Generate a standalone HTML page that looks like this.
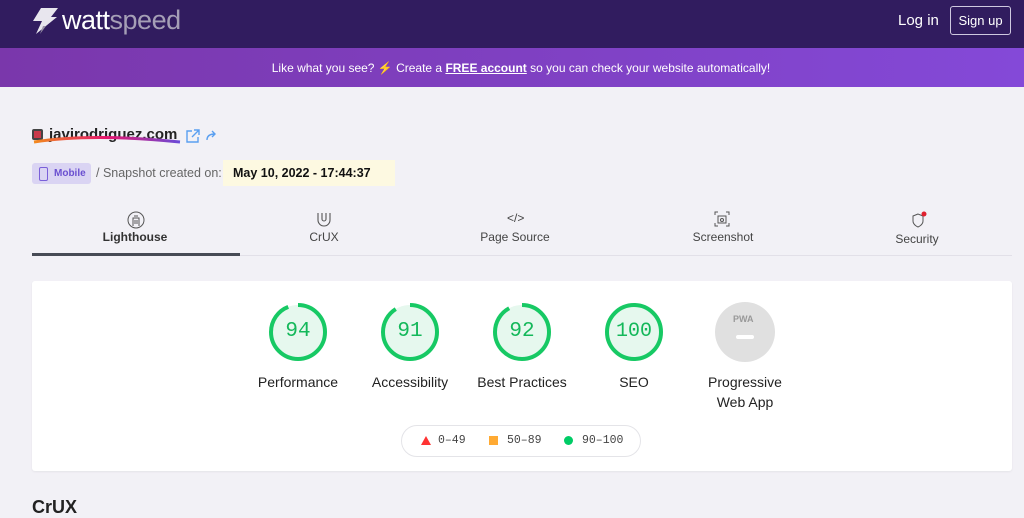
<!DOCTYPE html>
<html><head><meta charset="utf-8"><style>
*{margin:0;padding:0;box-sizing:border-box}
body{width:1024px;height:504px;overflow:hidden;background:#f2f1f6;font-family:"Liberation Sans",sans-serif;position:relative}
.hdr{position:absolute;left:0;top:0;width:1024px;height:48px;background:#311c5f}
.ban{position:absolute;left:0;top:48px;width:1024px;height:39px;background:linear-gradient(90deg,#7a37ab,#8449d8);color:#fff;font-size:12px;text-align:center;line-height:40px;padding-left:18px}
.abs{position:absolute}
.tab{position:absolute;top:230px;font-size:12px;color:#444;transform:translateX(-50%);white-space:nowrap}
.ring{position:absolute;top:302px;width:60px;height:60px;color:#14b85a;font-family:"Liberation Mono",monospace;font-size:21px;text-align:center;line-height:60px}
.ring svg{position:absolute;left:0;top:0}
.ring span{position:relative}
.lbl{position:absolute;top:372px;font-size:14px;color:#222;transform:translateX(-50%);text-align:center;line-height:20px}
</style></head><body>
<div class="hdr">
 <svg class="abs" style="left:32px;top:7px" width="30" height="30" viewBox="0 0 30 30"><path d="M9 1h17l-7 9h6L4 27l6-13H1z" fill="#e8e6ee"/><path d="M14 19l-6 8 3-8z" fill="#9a94a8"/></svg>
 <div class="abs" style="left:62px;top:5px;font-size:27px;color:#fff;letter-spacing:-0.5px">watt<span style="color:#a59fb6">speed</span></div>
 <div class="abs" style="left:898px;top:12px;font-size:15px;color:#fff">Log in</div>
 <div class="abs" style="left:950px;top:6px;width:61px;height:29px;border:1px solid #cfc8e0;border-radius:3px;color:#fff;font-size:13px;text-align:center;line-height:27px">Sign up</div>
</div>
<div class="ban">Like what you see? ⚡ Create a <b><u>FREE account</u></b> so you can check your website automatically!</div>
<div class="abs" style="left:32px;top:129px;width:11px;height:11px;background:#c9394a;border:2px solid #444;border-radius:2px"></div>
<div class="abs" style="left:49px;top:126px;font-size:15px;font-weight:bold;color:#222">javirodriguez.com</div>
<svg class="abs" style="left:32px;top:135px" width="150" height="10"><path d="M2 7 Q60 -2 148 7" stroke="url(#g)" stroke-width="3" fill="none"/><defs><linearGradient id="g"><stop offset="0" stop-color="#f28a1d"/><stop offset=".5" stop-color="#e6156f"/><stop offset="1" stop-color="#6a4bd8"/></linearGradient></defs></svg>
<svg class="abs" style="left:186px;top:129px" width="34" height="14" fill="none" stroke="#5a9ff0" stroke-width="1.4"><path d="M6 2H1v11h11V8M8 1h5v5M13 1L6 8"/><path d="M21 11c0-4 3-6 8-6M26 2l3 3-3 3"/></svg>
<div class="abs" style="left:32px;top:163px;width:59px;height:21px;background:#dad4f3;border-radius:3px;color:#6a4fd0;font-size:10px;font-weight:bold;line-height:21px;padding-left:22px">Mobile</div>
<div class="abs" style="left:39px;top:167px;width:9px;height:14px;border:1.5px solid #7a5fd9;border-radius:2px"></div>
<div class="abs" style="left:96px;top:166px;font-size:12.5px;color:#666">/ Snapshot created on:</div>
<div class="abs" style="left:223px;top:160px;width:172px;height:26px;background:#fdf9e1;font-size:12.5px;font-weight:bold;color:#111;line-height:26px;padding-left:10px">May 10, 2022 - 17:44:37</div>
<svg class="abs" style="left:126px;top:210px" width="20" height="20" fill="none" stroke="#555" stroke-width="1"><circle cx="10" cy="10" r="8"/><path d="M7 16V8h6v8M8 6h4M8 11h4M8 13h4"/></svg>
<svg class="abs" style="left:315px;top:210px" width="18" height="18" fill="none" stroke="#555" stroke-width="1.1"><path d="M3 3v7a6 6 0 0 0 12 0V3M7 3v6a2 2 0 0 0 4 0V3"/></svg>
<div class="abs" style="left:507px;top:211px;font-size:12px;color:#444">&lt;/&gt;</div>
<svg class="abs" style="left:714px;top:211px" width="16" height="16" fill="none" stroke="#555" stroke-width="1"><path d="M1 4V1h3M12 1h3v3M15 12v3h-3M4 15H1v-3"/><rect x="4" y="5" width="8" height="7"/><circle cx="8" cy="9" r="1.5"/></svg>
<svg class="abs" style="left:910px;top:210px" width="20" height="20" fill="none" stroke="#555" stroke-width="1"><path d="M8 4l-5 2v5c0 4 5 6 5 6s5-2 5-6V6z"/><circle cx="14" cy="4" r="2.5" fill="#e0202e" stroke="none"/></svg>
<div class="tab" style="left:135px;font-weight:bold;color:#333">Lighthouse</div>
<div class="tab" style="left:324px">CrUX</div>
<div class="tab" style="left:515px">Page Source</div>
<div class="tab" style="left:723px">Screenshot</div>
<div class="tab" style="left:917px;top:232px">Security</div>
<div class="abs" style="left:32px;top:255px;width:980px;height:1px;background:#e2e0e8"></div>
<div class="abs" style="left:32px;top:253px;width:208px;height:3px;background:#474b55"></div>
<div class="abs" style="left:32px;top:281px;width:980px;height:190px;background:#fff;border-radius:3px;box-shadow:0 1px 2px rgba(0,0,0,.06)"></div>
<div class="ring" style="left:268px"><svg width="60" height="60"><circle cx="30" cy="30" r="27" fill="#e6f8ee"/><circle cx="30" cy="30" r="27" fill="none" stroke="#17c964" stroke-width="4" stroke-dasharray="159.4 169.6" transform="rotate(-90 30 30)"/></svg><span>94</span></div>
<div class="ring" style="left:380px"><svg width="60" height="60"><circle cx="30" cy="30" r="27" fill="#e6f8ee"/><circle cx="30" cy="30" r="27" fill="none" stroke="#17c964" stroke-width="4" stroke-dasharray="154.4 169.6" transform="rotate(-90 30 30)"/></svg><span>91</span></div>
<div class="ring" style="left:492px"><svg width="60" height="60"><circle cx="30" cy="30" r="27" fill="#e6f8ee"/><circle cx="30" cy="30" r="27" fill="none" stroke="#17c964" stroke-width="4" stroke-dasharray="156 169.6" transform="rotate(-90 30 30)"/></svg><span>92</span></div>
<div class="ring" style="left:604px;font-size:20px"><svg width="60" height="60"><circle cx="30" cy="30" r="27" fill="#e6f8ee" stroke="#17c964" stroke-width="4"/></svg><span>100</span></div>
<div class="abs" style="left:715px;top:302px;width:60px;height:60px;border-radius:50%;background:#e0e0e0"></div>
<div class="abs" style="left:733px;top:314px;font-size:9px;color:#999;font-weight:bold">PWA</div>
<div class="abs" style="left:736px;top:335px;width:18px;height:4px;background:#fff;border-radius:2px"></div>
<div class="lbl" style="left:298px">Performance</div>
<div class="lbl" style="left:410px">Accessibility</div>
<div class="lbl" style="left:522px">Best Practices</div>
<div class="lbl" style="left:634px">SEO</div>
<div class="lbl" style="left:745px">Progressive<br>Web App</div>
<div class="abs" style="left:401px;top:425px;width:240px;height:32px;border:1px solid #e4e4e8;border-radius:16px;font-family:'Liberation Mono',monospace;font-size:11.5px;color:#444;line-height:30px">
 <span class="abs" style="left:19px;top:10px;width:0;height:0;border-left:5px solid transparent;border-right:5px solid transparent;border-bottom:9px solid #f33"></span><span class="abs" style="left:36px">0–49</span>
 <span class="abs" style="left:87px;top:10px;width:9px;height:9px;background:#fa3"></span><span class="abs" style="left:105px">50–89</span>
 <span class="abs" style="left:162px;top:10px;width:9px;height:9px;border-radius:50%;background:#0c6"></span><span class="abs" style="left:180px">90–100</span>
</div>
<div class="abs" style="left:32px;top:497px;font-size:18px;font-weight:bold;color:#222">CrUX</div>
</body></html>
